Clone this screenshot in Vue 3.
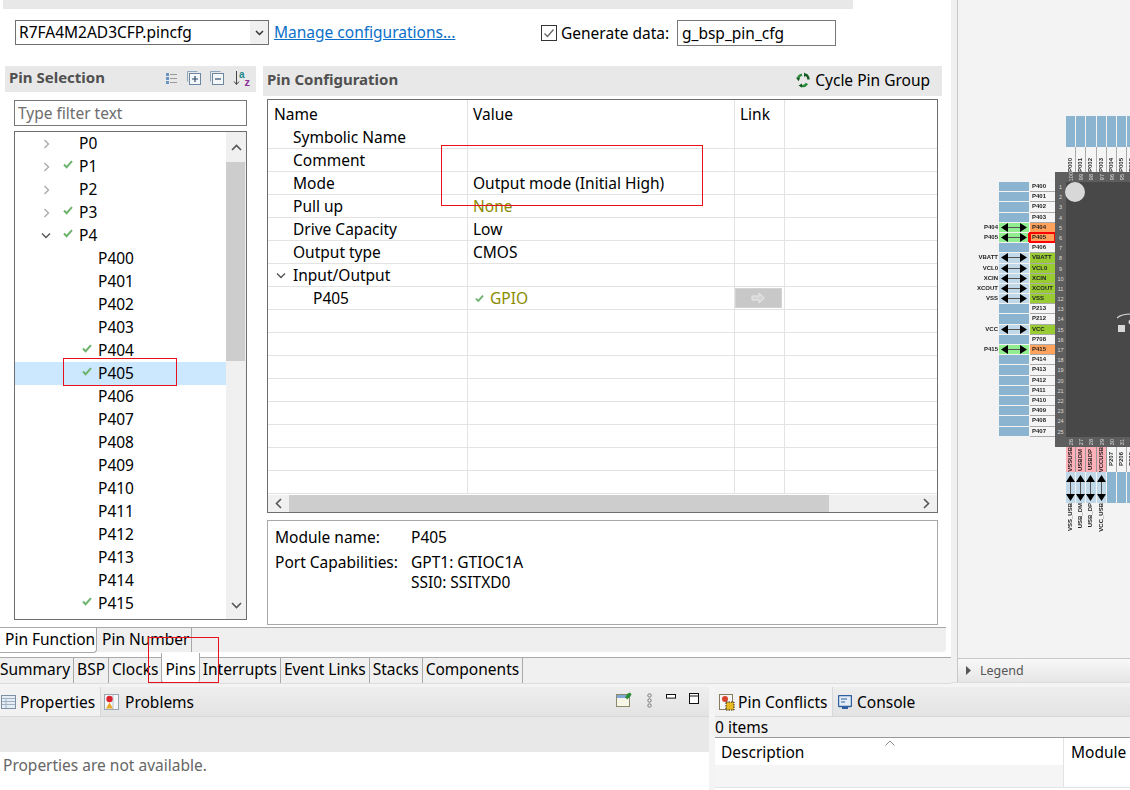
<script setup>
const treeRows = [
  { name: 'P0', level: 1, arrow: 'right' },
  { name: 'P1', level: 1, arrow: 'right', ok: true },
  { name: 'P2', level: 1, arrow: 'right' },
  { name: 'P3', level: 1, arrow: 'right', ok: true },
  { name: 'P4', level: 1, arrow: 'down', ok: true },
  { name: 'P400', level: 2 },
  { name: 'P401', level: 2 },
  { name: 'P402', level: 2 },
  { name: 'P403', level: 2 },
  { name: 'P404', level: 2, ok: true },
  { name: 'P405', level: 2, ok: true, selected: true },
  { name: 'P406', level: 2 },
  { name: 'P407', level: 2 },
  { name: 'P408', level: 2 },
  { name: 'P409', level: 2 },
  { name: 'P410', level: 2 },
  { name: 'P411', level: 2 },
  { name: 'P412', level: 2 },
  { name: 'P413', level: 2 },
  { name: 'P414', level: 2 },
  { name: 'P415', level: 2, ok: true }
]

const configRows = [
  { name: 'Symbolic Name', value: '' },
  { name: 'Comment', value: '' },
  { name: 'Mode', value: 'Output mode (Initial High)' },
  { name: 'Pull up', value: 'None', dim: true },
  { name: 'Drive Capacity', value: 'Low' },
  { name: 'Output type', value: 'CMOS' },
  { name: 'Input/Output', value: '', group: true },
  { name: 'P405', value: 'GPIO', dim: true, ok: true, child: true, link: true },
  {}, {}, {}, {}, {}, {}, {}, {}
]

const leftPins = [
  { n: 'P400' }, { n: 'P401' }, { n: 'P402' }, { n: 'P403' },
  { n: 'P404', ext: 'P404', kind: 'used' },
  { n: 'P405', ext: 'P405', kind: 'used', picked: true },
  { n: 'P406' },
  { n: 'VBATT', ext: 'VBATT', kind: 'power' },
  { n: 'VCL0', ext: 'VCL0', kind: 'power' },
  { n: 'XCIN', ext: 'XCIN', kind: 'power' },
  { n: 'XCOUT', ext: 'XCOUT', kind: 'power' },
  { n: 'VSS', ext: 'VSS', kind: 'power' },
  { n: 'P213' }, { n: 'P212' },
  { n: 'VCC', ext: 'VCC', kind: 'power' },
  { n: 'P708' },
  { n: 'P415', ext: 'P415', kind: 'used' },
  { n: 'P414' }, { n: 'P413' }, { n: 'P412' }, { n: 'P411' },
  { n: 'P410' }, { n: 'P409' }, { n: 'P408' }, { n: 'P407' }
]

const topPins = [
  { n: 'P000', num: 100 }, { n: 'P001', num: 99 }, { n: 'P002', num: 98 }, { n: 'P003', num: 97 },
  { n: 'P004', num: 96 }, { n: 'P005', num: 95 }, { n: 'P006', num: 94 }
]

const bottomPins = [
  { n: 'VSSUSB', ext: 'VSS_USB', num: 26, pink: true },
  { n: 'USBDM', ext: 'USB_DM', num: 27, pink: true },
  { n: 'USBDP', ext: 'USB_DP', num: 28, pink: true },
  { n: 'VCCUSB', ext: 'VCC_USB', num: 29, pink: true },
  { n: 'P207', num: 30 },
  { n: 'P206', num: 31 },
  { n: 'P205', num: 32 }
]

const mainTabs = ['Summary', 'BSP', 'Clocks', 'Pins', 'Interrupts', 'Event Links', 'Stacks', 'Components']
</script>

<template>
  <div class="app">
    <div class="upper">
      <div class="editor">
        <div class="strip"></div>

        <div class="config-row">
          <div class="combo">
            <span class="combo-text">R7FA4M2AD3CFP.pincfg</span>
            <span class="combo-btn">
              <svg width="9" height="6" viewBox="0 0 9 6"><path d="M1 1l3.5 3.5L8 1" fill="none" stroke="#333" stroke-width="1.5"/></svg>
            </span>
          </div>
          <a class="link">Manage configurations...</a>
          <span class="check-box">
            <svg width="14" height="14" viewBox="0 0 14 14"><path d="M2.5 7.5l3 3 6-7" fill="none" stroke="#666" stroke-width="1.3"/></svg>
          </span>
          <span class="check-label">Generate data:</span>
          <div class="data-input">g_bsp_pin_cfg</div>
        </div>

        <div class="panes">
          <section class="pin-sel">
            <header class="pane-head">
              <span class="pane-title">Pin Selection</span>
              <span class="head-tools">
                <svg width="13" height="13" viewBox="0 0 13 13">
                  <g fill="#6a94c4"><rect x="1" y="1" width="3" height="3"/><rect x="1" y="5" width="3" height="3"/><rect x="1" y="9" width="3" height="3"/></g>
                  <g stroke="#9a9a9a"><path d="M5 2.5h7M5 6.5h7M5 10.5h7"/></g>
                </svg>
                <svg width="14" height="14" viewBox="0 0 14 14">
                  <path d="M.5 10.5V.5h10" fill="none" stroke="#8fa6bd"/>
                  <rect x="2.5" y="2.5" width="11" height="11" fill="#f4f7fa" stroke="#6d87a3"/>
                  <path d="M5 8h6M8 5v6" stroke="#2c4a6b" stroke-width="1.2"/>
                </svg>
                <svg width="14" height="14" viewBox="0 0 14 14">
                  <path d="M.5 10.5V.5h10" fill="none" stroke="#8fa6bd"/>
                  <rect x="2.5" y="2.5" width="11" height="11" fill="#f4f7fa" stroke="#6d87a3"/>
                  <path d="M5 8h6" stroke="#2c4a6b" stroke-width="1.2"/>
                </svg>
                <svg width="18" height="17" viewBox="0 0 18 17">
                  <path d="M3.5 1v13M1 11.5l2.5 3 2.5-3" fill="none" stroke="#444" stroke-width="1"/>
                  <text x="6" y="8" class="sort-a">a</text>
                  <text x="11.5" y="16" class="sort-z">z</text>
                </svg>
              </span>
            </header>
            <div class="filter">Type filter text</div>
            <div class="tree">
              <div class="tree-list">
                <div
                  v-for="row in treeRows"
                  :key="row.name"
                  class="tree-row"
                  :class="{ selected: row.selected, deep: row.level === 2 }"
                >
                  <span class="tree-arrow">
                    <svg v-if="row.arrow === 'right'" width="7" height="10" viewBox="0 0 7 10"><path d="M1.5 1l4 4-4 4" fill="none" stroke="#aaa" stroke-width="1.4"/></svg>
                    <svg v-if="row.arrow === 'down'" class="arrow-down" width="10" height="7" viewBox="0 0 10 7"><path d="M1 1.5l4 4 4-4" fill="none" stroke="#555" stroke-width="1.4"/></svg>
                  </span>
                  <span class="tree-check">
                    <svg v-if="row.ok" width="10" height="9" viewBox="0 0 10 9"><path d="M1 4.5l2.6 2.7L9 1.2" fill="none" stroke="#6db36d" stroke-width="2"/></svg>
                  </span>
                  <span class="tree-name">{{ row.name }}</span>
                </div>
              </div>
              <div class="vbar">
                <span class="vbar-btn">
                  <svg width="11" height="7" viewBox="0 0 11 7"><path d="M1 6l4.5-4.5L10 6" fill="none" stroke="#555" stroke-width="1.6"/></svg>
                </span>
                <span class="vbar-thumb"></span>
                <span class="vbar-rest"></span>
                <span class="vbar-btn low">
                  <svg width="11" height="7" viewBox="0 0 11 7"><path d="M1 1l4.5 4.5L10 1" fill="none" stroke="#555" stroke-width="1.6"/></svg>
                </span>
              </div>
            </div>
          </section>

          <section class="pin-cfg">
            <header class="cfg-head">
              <span class="pane-title">Pin Configuration</span>
              <span class="cycle">
                <svg width="16" height="16" viewBox="0 0 16 16">
                  <path d="M3 6.5A5.5 5.5 0 0 1 7 2.7" fill="none" stroke="#2a8a3a" stroke-width="2.4"/>
                  <path d="M10.5 2.5a5.5 5.5 0 0 1 3 5" fill="none" stroke="#145a24" stroke-width="2.4"/>
                  <path d="M12 11.5a5.5 5.5 0 0 1-6.5 2.2" fill="none" stroke="#2a8a3a" stroke-width="2.4"/>
                  <path d="M1 5.5l4 .8-1.5 3zM9 .5l3.5 2.4L9 5zM7 11.5v4l-3.5-2z" fill="#145a24"/>
                </svg>
                Cycle Pin Group
              </span>
            </header>

            <div class="cfg-table">
              <div class="cfg-grid">
                <div class="cfg-header">
                  <span class="cell name-cell">Name</span>
                  <span class="cell val-cell">Value</span>
                  <span class="cell link-cell">Link</span>
                  <span class="cell"></span>
                </div>
                <div v-for="(row, i) in configRows" :key="i" class="cfg-row">
                  <span class="cell name-cell" :class="{ child: row.child, group: row.group }">
                    <svg v-if="row.group" class="group-arrow" width="10" height="7" viewBox="0 0 10 7"><path d="M1 1.5l4 4 4-4" fill="none" stroke="#555" stroke-width="1.4"/></svg>
                    {{ row.name }}
                  </span>
                  <span class="cell val-cell" :class="{ dim: row.dim }">
                    <svg v-if="row.ok" class="val-check" width="9" height="9" viewBox="0 0 10 9"><path d="M1 4.5l2.6 2.7L9 1.2" fill="none" stroke="#6db36d" stroke-width="2"/></svg>
                    {{ row.value }}
                  </span>
                  <span class="cell link-cell">
                    <span v-if="row.link" class="link-btn">
                      <svg width="15" height="12" viewBox="0 0 15 12"><path d="M1 4h7V1l5.5 5L8 11V8H1z" fill="#d6d6d6" stroke="#e8e8e8"/></svg>
                    </span>
                  </span>
                  <span class="cell"></span>
                </div>
              </div>
              <div class="hbar">
                <span class="hbar-btn">
                  <svg width="7" height="11" viewBox="0 0 7 11"><path d="M6 1L1.5 5.5 6 10" fill="none" stroke="#555" stroke-width="1.6"/></svg>
                </span>
                <span class="hbar-thumb"></span>
                <span class="hbar-btn end">
                  <svg width="7" height="11" viewBox="0 0 7 11"><path d="M1 1l4.5 4.5L1 10" fill="none" stroke="#555" stroke-width="1.6"/></svg>
                </span>
              </div>
            </div>

            <div class="info">
              <span>Module name:</span><span>P405</span>
              <span>Port Capabilities:</span>
              <span class="info-lines">GPT1: GTIOC1A<br>SSI0: SSITXD0</span>
            </div>
          </section>
        </div>

        <div class="sub-tabs">
          <span class="sub-tab active">Pin Function</span>
          <span class="sub-tab">Pin Number</span>
        </div>

        <div class="main-tabs">
          <span v-for="tab in mainTabs" :key="tab" class="main-tab" :class="{ active: tab === 'Pins' }">{{ tab }}</span>
        </div>
      </div>

      <div class="sash"></div>

      <div class="package">
        <div class="canvas">
          <div class="board">
            <div class="top-pins">
              <div v-for="p in topPins" :key="p.n" class="v-pin">
                <span class="v-body"></span>
                <span class="v-name top-name"><i>{{ p.n }}</i></span>
              </div>
            </div>

            <div class="board-mid">
              <div class="left-pins">
                <div v-for="p in leftPins" :key="p.n" class="h-pin">
                  <span class="ext">{{ p.ext }}</span>
                  <span class="h-body" :class="p.kind">
                    <svg v-if="p.kind" width="26" height="9" viewBox="0 0 26 9">
                      <path d="M6 4.5h14" stroke="#555" stroke-width="1"/>
                      <path d="M0 4.5L7 0v9zM26 4.5L19 0v9z" fill="#000"/>
                    </svg>
                  </span>
                  <span class="h-name" :class="[p.kind, { picked: p.picked }]">{{ p.n }}</span>
                </div>
              </div>

              <div class="chip">
                <span class="chip-corner"></span>
                <div class="nums-top"><span v-for="p in topPins" :key="p.num"><i>{{ p.num }}</i></span></div>
                <div class="nums-left"><span v-for="(p, i) in leftPins" :key="p.n">{{ i + 1 }}</span></div>
                <div class="chip-core">
                  <span class="dot"></span>
                  <svg class="mark" width="14" height="20" viewBox="0 0 14 20">
                    <path d="M0 5C3 2 8 1 14 1" fill="none" stroke="#ddd" stroke-width="1.2"/>
                    <rect x="1" y="12" width="7" height="7" fill="#d8d8d8"/>
                    <circle cx="14" cy="9" r="2.5" fill="#d8d8d8"/>
                  </svg>
                </div>
                <span class="chip-corner"></span>
                <div class="nums-bottom"><span v-for="p in bottomPins" :key="p.num"><i>{{ p.num }}</i></span></div>
              </div>
            </div>

            <div class="bottom-pins">
              <div v-for="p in bottomPins" :key="p.n" class="b-pin">
                <span class="v-name" :class="{ pink: p.pink }"><i>{{ p.n }}</i></span>
                <span class="b-body" :class="{ power: p.pink }">
                  <svg v-if="p.pink" width="9" height="30" viewBox="0 0 9 30">
                    <path d="M4.5 6v18" stroke="#555" stroke-width="1"/>
                    <path d="M4.5 2L9 9H0zM4.5 28L0 21h9z" fill="#000"/>
                  </svg>
                </span>
                <span v-if="p.ext" class="b-ext"><i>{{ p.ext }}</i></span>
              </div>
            </div>
          </div>
        </div>
        <div class="legend">
          <svg width="7" height="9" viewBox="0 0 7 9"><path d="M1 0l5 4.5L1 9z" fill="#555"/></svg>
          <span>Legend</span>
        </div>
      </div>
    </div>

    <div class="lower">
      <section class="view left-view">
        <div class="view-tabs">
          <span class="view-tab active">
            <svg width="15" height="14" viewBox="0 0 15 14">
              <rect x=".5" y=".5" width="14" height="13" fill="#e6edf5" stroke="#7d8fa3"/>
              <path d="M1 3.5h13M1 6.5h13M1 9.5h13M5 4v9" stroke="#9fb2c6"/>
            </svg>
            Properties
          </span>
          <span class="view-tab second">
            <svg width="15" height="16" viewBox="0 0 15 16">
              <rect x=".5" y=".5" width="14" height="15" fill="#f4f6f8" stroke="#9aa6b2"/>
              <path d="M9 1v14" stroke="#b8c4d0"/>
              <circle cx="5.5" cy="5" r="3.2" fill="#d9232e"/>
              <path d="M5.5 8.5L9 14.5H2z" fill="#e8a92b"/>
            </svg>
            Problems
          </span>
          <span class="view-tools">
            <svg width="16" height="15" viewBox="0 0 16 15">
              <rect x=".5" y="2.5" width="13" height="12" fill="#f7f5e8" stroke="#8a8a6a"/>
              <path d="M1 3h12v3H1z" fill="#7fa8d8"/>
              <path d="M9 6l2-4 3-1.5 1.5 2L14 5l-3 2.5-1-1.5z" fill="#2f8a3c"/>
            </svg>
            <svg width="5" height="15" viewBox="0 0 5 15" class="dots">
              <g fill="none" stroke="#777"><circle cx="2.5" cy="2.5" r="1.7"/><circle cx="2.5" cy="7.5" r="1.7"/><circle cx="2.5" cy="12.5" r="1.7"/></g>
            </svg>
            <svg width="10" height="5" viewBox="0 0 10 5" class="min"><rect x=".5" y=".5" width="9" height="3.6" fill="#fff" stroke="#111"/></svg>
            <svg width="10" height="11" viewBox="0 0 10 11" class="max"><rect x=".5" y=".5" width="9" height="10" fill="#fff" stroke="#111"/><path d="M1 3h8" stroke="#111"/></svg>
          </span>
        </div>
        <div class="view-band"></div>
        <div class="view-msg">Properties are not available.</div>
      </section>

      <section class="view right-view">
        <div class="view-tabs">
          <span class="view-tab active conflicts">
            <svg width="16" height="17" viewBox="0 0 16 17">
              <rect x=".5" y=".5" width="13" height="15" fill="#f4f6f8" stroke="#8a7a60"/>
              <circle cx="6" cy="5" r="3" fill="#d9432e"/>
              <rect x="7" y="8" width="8" height="8" fill="#e8b820" stroke="#222" stroke-dasharray="1.5 1"/>
            </svg>
            Pin Conflicts
          </span>
          <span class="view-tab plain">
            <svg width="14" height="15" viewBox="0 0 14 15">
              <rect x=".5" y=".5" width="13" height="11" rx="1" fill="#e4ecf7" stroke="#2f5f9f" stroke-width="1.4"/>
              <path d="M3 4h6M3 7h4" stroke="#2f5f9f" stroke-width="1.2"/>
              <path d="M4 14h6v-2H4z" fill="#2f5f9f"/>
            </svg>
            Console
          </span>
        </div>
        <div class="items">0 items</div>
        <div class="desc-head">
          <span class="desc-col">
            Description
            <svg class="sort-caret" width="10" height="6" viewBox="0 0 10 6"><path d="M.5 5.5L5 1l4.5 4.5" fill="none" stroke="#888"/></svg>
          </span>
          <span class="mod-col">Module</span>
        </div>
        <div class="desc-row">
          <span class="desc-col"></span>
          <span class="mod-col"></span>
        </div>
      </section>
    </div>

    <!-- annotations drawn on top of the screenshot -->
    <span class="mark-box box-mode"></span>
    <span class="mark-box box-pin"></span>
    <span class="mark-box box-tab"></span>
  </div>
</template>

<style>
html, body {
  margin: 0;
  overflow: hidden;
}
</style>

<style scoped>
.app {
  position: relative;
  width: 1130px;
  height: 790px;
  overflow: hidden;
  display: flex;
  flex-direction: column;
  background: #f4f4f4;
  color: #000;
  font-family: "Noto Sans", "Open Sans", sans-serif;
  font-size: 15.5px;
  line-height: 20px;
}

.upper {
  display: flex;
  height: 683px;
  flex: none;
  border-bottom: 1px solid #dcdcdc;
  box-sizing: border-box;
}

.editor {
  width: 951px;
  background: #fff;
  flex: none;
}

.strip {
  height: 9px;
  margin: 0 98px 0 3px;
  background: #e8e8e8;
}

.config-row {
  display: flex;
  align-items: flex-start;
  height: 57px;
  padding: 11px 0 0 15px;
  box-sizing: border-box;
}

.combo {
  display: flex;
  width: 254px;
  height: 25px;
  box-sizing: border-box;
  border: 1px solid #707070;
}

.combo-text {
  flex: 1;
  padding-left: 3px;
  line-height: 22px;
}

.combo-btn {
  width: 18px;
  background: #f0f0f0;
  display: flex;
  align-items: center;
  justify-content: center;
}

.link {
  margin-left: 5px;
  line-height: 25px;
  height: 25px;
  color: #0b6fc9;
  text-decoration: underline;
  width: 267px;
}

.check-box {
  width: 16px;
  height: 16px;
  margin-top: 5px;
  border: 1px solid #333;
  box-sizing: border-box;
  display: flex;
  align-items: center;
  justify-content: center;
}

.check-label {
  margin-left: 4px;
  line-height: 26px;
  width: 116px;
  white-space: nowrap;
}

.data-input {
  width: 159px;
  height: 26px;
  box-sizing: border-box;
  border: 1px solid #777;
  padding-left: 4px;
  line-height: 25px;
}

.panes {
  display: flex;
  height: 561px;
}

.pin-sel {
  width: 251px;
  margin-left: 5px;
  flex: none;
}

.pin-cfg {
  width: 679px;
  margin-left: 7px;
  flex: none;
}

.pane-head {
  height: 26px;
  background: #e8e8e8;
  display: flex;
  align-items: center;
  justify-content: space-between;
  padding-left: 4px;
  box-sizing: border-box;
}

.pane-title {
  font-size: 15px;
  font-weight: 700;
  color: #505050;
  margin-bottom: 4px;
}

.head-tools {
  display: flex;
  align-items: center;
  gap: 9px;
  padding-right: 5px;
  margin-bottom: 2px;
}

.sort-a {
  font: 700 10px "Liberation Sans", sans-serif;
  fill: #1f8a8a;
}

.sort-z {
  font: 700 11px "Liberation Sans", sans-serif;
  fill: #8a2f9a;
}

.filter {
  width: 233px;
  height: 26px;
  margin: 8px 0 0 9px;
  box-sizing: border-box;
  border: 1px solid #777;
  padding-left: 3px;
  line-height: 24px;
  color: #6d6d6d;
}

.tree {
  display: flex;
  width: 233px;
  height: 489px;
  margin: 5px 0 0 9px;
  box-sizing: border-box;
  border: 1px solid #6e6e6e;
}

.tree-list {
  flex: 1;
}

.tree-row {
  display: flex;
  align-items: center;
  height: 23px;
}

.tree-row.selected {
  background: #cce8ff;
}

.tree-arrow {
  width: 23px;
  margin-left: 28px;
  display: flex;
}

.arrow-down {
  margin-left: -2px;
}

.tree-check {
  width: 16px;
  display: flex;
  margin-top: -4px;
  margin-left: -3px;
}

.tree-row.deep .tree-arrow {
  width: 42px;
}

.tree-name {
  margin-top: -2px;
}

.vbar {
  width: 20px;
  display: flex;
  flex-direction: column;
  background: #f0f0f0;
}

.vbar-btn {
  height: 30px;
  display: flex;
  align-items: center;
  justify-content: center;
  flex: none;
}

.vbar-btn.low {
  height: 28px;
}

.vbar-thumb {
  height: 199px;
  margin: 0 1px 0 0;
  background: #cdcdcd;
  flex: none;
}

.vbar-rest {
  flex: 1;
}

.cfg-head {
  height: 30px;
  background: #e8e8e8;
  display: flex;
  align-items: center;
  justify-content: space-between;
  padding: 0 12px 0 4px;
  box-sizing: border-box;
}

.cycle {
  display: flex;
  align-items: center;
  gap: 4px;
  margin-bottom: 2px;
}

.cfg-table {
  width: 671px;
  height: 414px;
  margin: 3px 0 0 4px;
  box-sizing: border-box;
  border: 1px solid #6e6e6e;
  display: flex;
  flex-direction: column;
}

.cfg-grid {
  height: 395px;
  overflow: hidden;
}

.cfg-header,
.cfg-row {
  display: grid;
  grid-template-columns: 199px 267px 50px 1fr;
}

.cfg-header {
  height: 26px;
  line-height: 28px;
}

.cfg-row {
  height: 23px;
  line-height: 23px;
  box-sizing: border-box;
  border-bottom: 1px solid #e3e3e3;
}

.cfg-row:first-of-type {
  height: 22px;
}

.cell {
  border-left: 1px solid #e3e3e3;
  padding-left: 5px;
  white-space: nowrap;
  position: relative;
}

.name-cell {
  border-left: 0;
  padding-left: 25px;
}

.cfg-header .name-cell {
  padding-left: 6px;
}

.name-cell.child {
  padding-left: 45px;
}

.group-arrow {
  position: absolute;
  left: 8px;
  top: 8px;
}

.dim {
  color: #8a8a00;
}

.val-check {
  margin: 0 2px 3px 2px;
  vertical-align: middle;
}

.link-btn {
  display: flex;
  align-items: center;
  justify-content: center;
  width: 47px;
  height: 20px;
  margin: 1px 0 0 -5px;
  background: #c8c8c8;
  border: 1px solid #d4d4d4;
  box-sizing: border-box;
}

.hbar {
  display: flex;
  height: 17px;
  background: #f0f0f0;
}

.hbar-btn {
  width: 21px;
  display: flex;
  align-items: center;
  justify-content: center;
  flex: none;
}

.hbar-btn.end {
  margin-left: auto;
}

.hbar-thumb {
  width: 540px;
  background: #cdcdcd;
}

.info {
  width: 671px;
  height: 105px;
  margin: 7px 0 0 4px;
  box-sizing: border-box;
  border: 1px solid #a8a8a8;
  padding: 6px 7px 0;
  display: grid;
  grid-template-columns: 136px 1fr;
  grid-auto-rows: min-content;
  row-gap: 5px;
}

.sub-tabs {
  display: flex;
  width: 946px;
  height: 25px;
  box-sizing: border-box;
  border-top: 1px solid #a8a8a8;
  background: #efefef;
  border-bottom-right-radius: 3px;
}

.sub-tab {
  padding-left: 5px;
  border-right: 1px solid #a8a8a8;
  line-height: 22px;
  box-sizing: border-box;
  width: 95px;
  white-space: nowrap;
}

.sub-tab.active {
  width: 97px;
  background: #fff;
  border-bottom: 1px solid #a8a8a8;
  border-bottom-right-radius: 4px;
  height: 25px;
}

.main-tabs {
  display: flex;
  height: 25px;
  margin-top: 5px;
  background: #f0f0f0;
  border-top: 1px solid #aaa;
  border-bottom: 1px solid #dcdcdc;
}

.main-tab {
  padding: 0 3px;
  border-right: 1px solid #a8a8a8;
  line-height: 23px;
  white-space: nowrap;
}

.main-tab:first-child {
  padding-left: 0;
}

.main-tab.active {
  background: #fff;
  margin-top: -5px;
  padding-top: 5px;
  border-radius: 0 0 4px 4px;
  border-left: 1px solid #a8a8a8;
  margin-left: -1px;
  height: 25px;
}

.sash {
  width: 6px;
  flex: none;
  background: #f0f0f0;
  border-right: 1px solid #c8c8c8;
}

.package {
  flex: 1;
  min-width: 0;
  display: flex;
  flex-direction: column;
  overflow: hidden;
}

.canvas {
  height: 659px;
  flex: none;
  background: #f3f3f3;
  overflow: hidden;
  box-sizing: border-box;
  padding: 116px 0 0 27px;
  border-bottom: 1px solid #c8c8c8;
}

.board {
  width: 400px;
  filter: blur(0.4px);
  font-family: "Liberation Sans", sans-serif;
  font-size: 6px;
  font-weight: 700;
  line-height: 9px;
  color: #222;
}

.top-pins {
  display: flex;
  height: 56px;
  padding-left: 81px;
}

.v-pin {
  width: 10.2px;
  flex: none;
  display: flex;
  flex-direction: column;
}

.v-body {
  height: 31px;
  margin-right: 1px;
  background: #8ab4cf;
}

.v-name {
  height: 25px;
  width: 9.2px;
  flex: none;
  background: #f5f5f5;
  box-shadow: 1px 0 0 #aaa;
  display: flex;
  justify-content: center;
  align-items: center;
  box-sizing: border-box;
}

.v-name i,
.b-ext i,
.nums-top i,
.nums-bottom i {
  font-style: normal;
  writing-mode: vertical-rl;
  transform: rotate(180deg);
  white-space: nowrap;
}

.top-name {
  align-items: flex-end;
}

.v-name.pink {
  background: #ffb0b8;
  box-shadow: 1px 0 0 #999;
}

.board-mid {
  display: flex;
  height: 275px;
}

.left-pins {
  width: 70px;
  flex: none;
  padding-top: 10px;
  box-sizing: border-box;
}

.h-pin {
  display: flex;
  height: 10.2px;
}

.ext {
  width: 14px;
  flex: none;
  display: flex;
  justify-content: flex-end;
  padding-right: 1px;
  box-sizing: border-box;
  white-space: nowrap;
}

.h-body {
  width: 30px;
  height: 9.2px;
  flex: none;
  margin-right: 1px;
  background: #8ab4cf;
  display: flex;
  align-items: center;
  justify-content: center;
}

.h-body.used {
  background: #90ee90;
}

.h-body.power {
  background: #c0d8e8;
}

.h-name {
  width: 25px;
  height: 9.2px;
  flex: none;
  background: #f5f5f5;
  box-shadow: 0 1px 0 #aaa;
  padding-left: 2px;
  box-sizing: border-box;
  white-space: nowrap;
  overflow: hidden;
}

.h-name.used {
  background: #ffa35c;
}

.h-name.power {
  background: #99cc33;
}

.h-name.picked {
  outline: 2px solid #f00;
  outline-offset: -1px;
  box-shadow: -2px 0 0 #f00;
}

.chip {
  flex: 1;
  display: grid;
  grid-template-columns: 11px 1fr;
  grid-template-rows: 10px 1fr 10px;
  background: #5e5e5e;
  color: #ddd;
  font-size: 5.5px;
  font-weight: 400;
  line-height: 10px;
}

.nums-top,
.nums-bottom {
  display: flex;
}

.nums-top span,
.nums-bottom span {
  width: 10.2px;
  flex: none;
  display: flex;
  justify-content: center;
  align-items: center;
}

.nums-left {
  text-align: center;
}

.nums-left span {
  display: block;
  height: 10.2px;
}

.chip-core {
  position: relative;
  background: #484848;
}

.dot {
  position: absolute;
  left: -1px;
  top: 0;
  width: 20px;
  height: 20px;
  border-radius: 50%;
  background: #d8d8d8;
}

.mark {
  position: absolute;
  left: 51px;
  top: 131px;
}

.bottom-pins {
  display: flex;
  padding-left: 81px;
}

.b-pin {
  width: 10.2px;
  flex: none;
  display: flex;
  flex-direction: column;
}

.b-body {
  width: 9.2px;
  height: 31px;
  background: #8ab4cf;
  display: flex;
  justify-content: center;
  align-items: center;
}

.b-body.power {
  background: #c0d8e8;
}

.b-ext {
  height: 24px;
  width: 9.2px;
  display: flex;
  justify-content: center;
  align-items: flex-start;
}

.legend {
  height: 23px;
  display: flex;
  align-items: center;
  gap: 8px;
  padding-left: 7px;
  background: linear-gradient(#f8f8f8, #e6e6e6);
  color: #555;
  font-size: 12.5px;
}

.lower {
  display: flex;
  justify-content: space-between;
  margin-top: 4px;
  flex: 1;
}

.view {
  background: #fff;
}

.left-view {
  width: 709px;
}

.right-view {
  width: 415px;
}

.view-tabs {
  display: flex;
  height: 30px;
  background: linear-gradient(#eeeeee, #e3e3e3);
  border-bottom: 1px solid #d8d8d8;
  box-sizing: border-box;
}

.view-tab {
  display: flex;
  align-items: center;
  gap: 4px;
  padding: 1px 4px 0 1px;
  line-height: 28px;
  white-space: nowrap;
}

.view-tab.active {
  background: #f2f2f2;
  width: 101px;
  box-sizing: border-box;
  border-right: 1px solid #d8d8d8;
}

.view-tab.second {
  padding-left: 3px;
  gap: 6px;
}

.view-tab.conflicts {
  width: 118px;
  padding-left: 4px;
  gap: 3px;
}

.view-tab.plain {
  padding-left: 5px;
  gap: 5px;
}

.view-tools {
  margin-left: auto;
  display: flex;
  align-items: flex-start;
  padding: 5px 10px 0 0;
}

.dots {
  margin: 1px 0 0 15px;
}

.min {
  margin: 2px 0 0 14px;
}

.max {
  margin: 1px 0 0 13px;
}

.view-band {
  height: 35px;
  background: #e8e8e8;
}

.view-msg {
  padding: 3px 0 0 3px;
  color: #666;
}

.items {
  height: 20px;
  line-height: 21px;
  background: #f0f0f0;
  border-bottom: 1px solid #999;
}

.desc-head,
.desc-row {
  display: flex;
}

.desc-head {
  height: 27px;
  line-height: 29px;
}

.desc-row {
  height: 22px;
  background: #f5f5f5;
  border-bottom: 1px solid #e3e3e3;
}

.desc-col {
  width: 349px;
  flex: none;
  padding-left: 6px;
  box-sizing: border-box;
  position: relative;
  border-right: 1px solid #e3e3e3;
}

.mod-col {
  padding-left: 7px;
  background: #fff;
  flex: 1;
}

.sort-caret {
  position: absolute;
  left: 170px;
  top: 2px;
}

.mark-box {
  position: absolute;
  box-sizing: border-box;
  border: 1px solid #e8101c;
  pointer-events: none;
}

.box-mode {
  left: 441px;
  top: 145px;
  width: 262px;
  height: 61px;
}

.box-pin {
  left: 63px;
  top: 358px;
  width: 114px;
  height: 28px;
}

.box-tab {
  left: 148px;
  top: 637px;
  width: 71px;
  height: 46px;
}
</style>
